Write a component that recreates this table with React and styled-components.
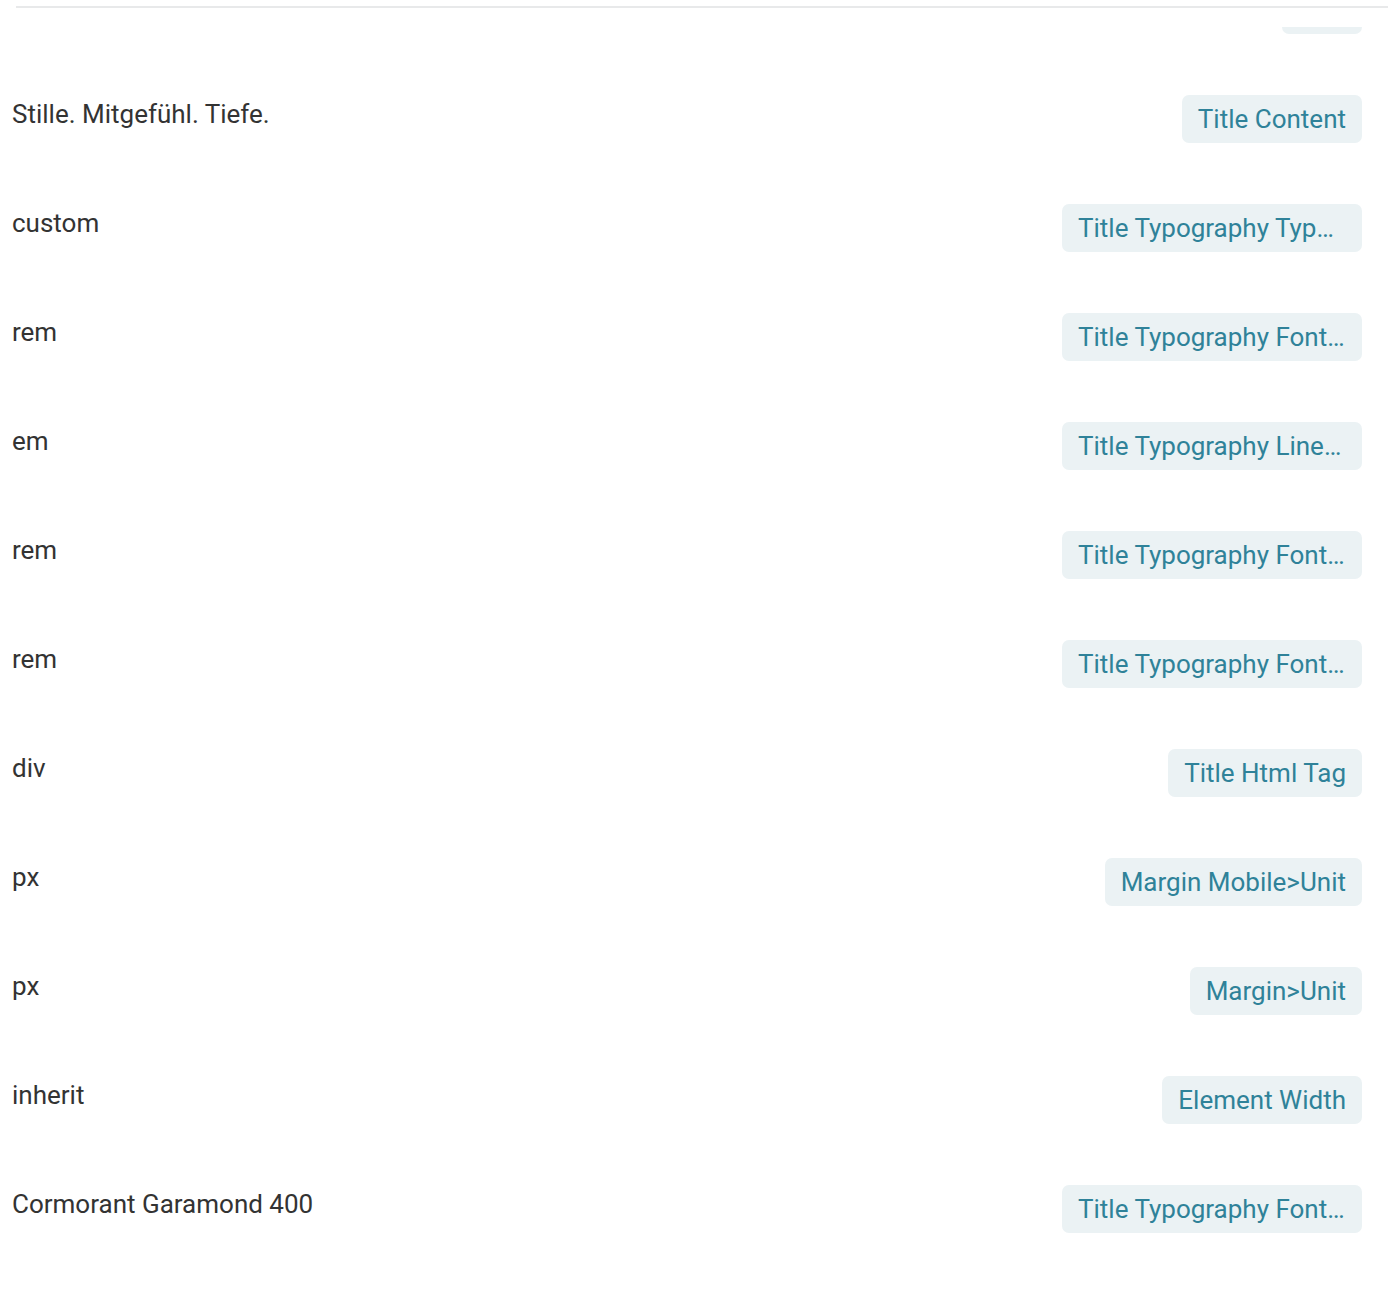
import React from 'react'
import styled, { createGlobalStyle } from 'styled-components'

const GlobalStyle = createGlobalStyle`
  html, body {
    margin: 0;
    padding: 0;
    background: #ffffff;
  }
  body {
    font-family: Roboto, "Liberation Sans", Arial, sans-serif;
  }
`

const Page = styled.div`
  width: 1388px;
  height: 1316px;
  display: flex;
  flex-direction: column;
  overflow: hidden;
  background: #fff;
`

const Header = styled.div`
  height: 27px;
  flex-shrink: 0;
  padding-top: 6px;
  padding-left: 16px;
  box-sizing: border-box;
`

const Divider = styled.div`
  height: 2px;
  background: #e8e9ea;
`

// list is scrolled: the first row sits mostly under the header
const Viewport = styled.div`
  flex: 1;
  overflow: hidden;
`

const List = styled.ul`
  list-style: none;
  margin: -41px 0 0;
  padding: 0;
`

const Row = styled.li`
  display: flex;
  align-items: flex-start;
  justify-content: space-between;
  gap: 24px;
  height: 109px;
  padding: 0 26px 0 12px;
  box-sizing: border-box;
`

const Value = styled.span`
  margin-top: 3px;
  font-size: 26px;
  line-height: 32px;
  color: #333333;
  white-space: nowrap;
`

const FieldTag = styled.span`
  flex-shrink: 0;
  max-width: 300px;
  box-sizing: border-box;
  padding: 8px 16px;
  border-radius: 7px;
  background: #ebf2f4;
  color: #2f8299;
  font-size: 26px;
  line-height: 32px;
  white-space: nowrap;
  overflow: hidden;
  text-overflow: ellipsis;
`

const rows = [
  { value: '', field: 'Size' },
  { value: 'Stille. Mitgefühl. Tiefe.', field: 'Title Content' },
  { value: 'custom', field: 'Title Typography Typography' },
  { value: 'rem', field: 'Title Typography Font Size Unit' },
  { value: 'em', field: 'Title Typography Line Height Unit' },
  { value: 'rem', field: 'Title Typography Font Size Tablet Unit' },
  { value: 'rem', field: 'Title Typography Font Size Mobile Unit' },
  { value: 'div', field: 'Title Html Tag' },
  { value: 'px', field: 'Margin Mobile>Unit' },
  { value: 'px', field: 'Margin>Unit' },
  { value: 'inherit', field: 'Element Width' },
  { value: 'Cormorant Garamond 400', field: 'Title Typography Font Family' },
]

export default function App() {
  return (
    <Page>
      <GlobalStyle />
      <Header>
        <Divider />
      </Header>
      <Viewport>
        <List>
          {rows.map((row, i) => (
            <Row key={i}>
              <Value>{row.value}</Value>
              <FieldTag>{row.field}</FieldTag>
            </Row>
          ))}
        </List>
      </Viewport>
    </Page>
  )
}
